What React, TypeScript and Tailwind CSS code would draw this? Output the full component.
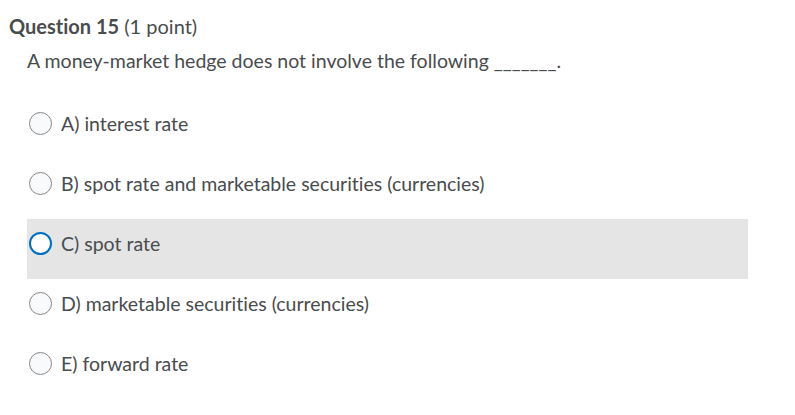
const options = [
  { id: 'A', label: 'A) interest rate' },
  { id: 'B', label: 'B) spot rate and marketable securities (currencies)' },
  { id: 'C', label: 'C) spot rate' },
  { id: 'D', label: 'D) marketable securities (currencies)' },
  { id: 'E', label: 'E) forward rate' },
];

function Radio({ focused }: { focused: boolean }) {
  return (
    <span
      className={
        focused
          ? 'w-[23px] h-[23px] rounded-full border-2 border-[#006fbf] bg-white shrink-0'
          : 'w-[23px] h-[23px] rounded-full border border-[#868686] bg-[#f9fafb] shrink-0'
      }
    />
  );
}

export default function App() {
  const selected = 'C';
  return (
    <div className="w-[795px] h-[415px] bg-white text-[#494c4e] font-['Lato','Liberation_Sans',sans-serif] [font-variant-ligatures:none]">
      <div className="pt-[11px] pl-[9px] text-[20px] leading-[30px]">
        <span className="font-bold">Question 15</span> (1 point)
      </div>
      <div className="pl-[27px] pt-[5px] text-[19.5px] leading-[30px]">
        A money-market hedge does not involve the following _______.
      </div>
      <div className="mt-[23px] pl-[27px] w-[748px]">
        {options.map((o) => (
          <div
            key={o.id}
            className={
              'h-[60px] pt-[13px] pl-[2px] ' +
              (o.id === selected ? 'bg-[#e5e5e5]' : '')
            }
          >
            <div className="flex items-center gap-[9px] h-[23px]">
              <Radio focused={o.id === selected} />
              <span className="text-[19.5px]">{o.label}</span>
            </div>
          </div>
        ))}
      </div>
    </div>
  );
}
